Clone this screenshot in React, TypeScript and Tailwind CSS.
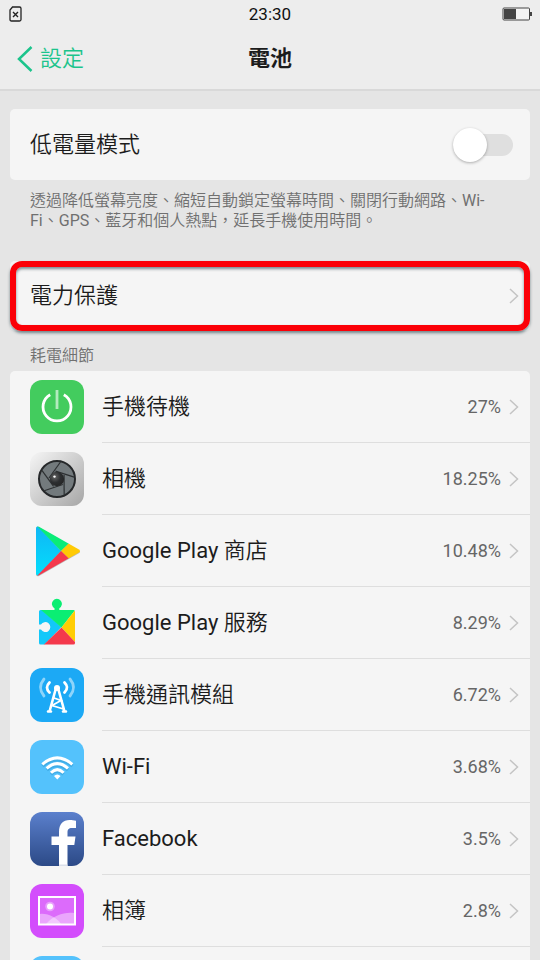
import type { ReactNode } from "react";

function Tile({ className = "", children }: { className?: string; children?: ReactNode }) {
  return (
    <svg viewBox="0 0 54 54" aria-hidden="true" className={`size-[54px] shrink-0 overflow-hidden rounded-xl ${className}`}>
      {children}
    </svg>
  );
}

function PowerIcon() {
  return (
    <Tile className="bg-[#43cc5e]">
      <path d="M20.2 14.7a14 14 0 1 0 13.6 0" fill="none" stroke="#fff" strokeWidth="2.8" />
      <path d="M27 10v19" stroke="#fff" strokeOpacity=".6" strokeWidth="2.8" />
    </Tile>
  );
}

function CameraIcon() {
  return (
    <Tile>
      <defs>
        <linearGradient id="camera-body" x1="0" y1="0" x2="1" y2="1">
          <stop offset="0" stopColor="#f6f6f6" />
          <stop offset="1" stopColor="#a6a6a6" />
        </linearGradient>
        <radialGradient id="camera-lens" cx=".35" cy=".35" r=".8">
          <stop offset="0" stopColor="#666" />
          <stop offset=".5" stopColor="#2c2e30" />
          <stop offset="1" stopColor="#222" />
        </radialGradient>
      </defs>
      <rect width="54" height="54" fill="url(#camera-body)" />
      <circle cx="27" cy="27" r="18" fill="#737a7d" stroke="#26282a" strokeWidth="2" />
      <g stroke="#2d3032" strokeWidth="1.2">
        {[0, 72, 144, 216, 288].map((angle) => (
          <path key={angle} d="M30.5 10L19 26" transform={`rotate(${angle} 27 27)`} />
        ))}
      </g>
      <circle cx="27" cy="27" r="7.2" fill="url(#camera-lens)" />
      <circle cx="24.5" cy="24.6" r="1.2" fill="#fff" />
    </Tile>
  );
}

function PlayStoreIcon() {
  return (
    <Tile>
      <defs>
        <linearGradient id="play-blue" x1="0" y1="0" x2="0" y2="1">
          <stop offset="0" stopColor="#10b4f5" />
          <stop offset="1" stopColor="#04e0fc" />
        </linearGradient>
        <clipPath id="play-shape">
          <path d="M6 4.500Q6 1.500 9 2.800L48.500 25.200Q51.500 27 48.500 28.800L9 51.200Q6 52.500 6 49.500Z" />
        </clipPath>
      </defs>
      <path d="M6 5Q6 2 9 3.300L48.500 26Q51.500 28 48.500 29.600L9 52Q6 53 6 50Z" fill="#bbb" />
      <g clipPath="url(#play-shape)">
        <path d="M6 0L31 27L6 54Z" fill="url(#play-blue)" />
        <path d="M5 0L50 0L39 19.200L31 27Z" fill="#0aec78" />
        <path d="M39 19.200L31 27L39 34.800L56 27Z" fill="#ffca05" />
        <path d="M5 54L31 27L39 34.800L50 54Z" fill="#f4394c" />
      </g>
    </Tile>
  );
}

function PlayServicesIcon() {
  return (
    <Tile>
      <defs>
        <clipPath id="puzzle-shape">
          <path d="M10.500 14H24.500V12.200A5 5 0 1 1 29.300 12.200V14H43.500Q45 14 45 15.500V47Q45 48.500 43.500 48.500H10.500Q9 48.500 9 47V33.600H11A5 5 0 1 0 11 28.600H9V15.500Q9 14 10.500 14Z" />
        </clipPath>
      </defs>
      <g clipPath="url(#puzzle-shape)">
        <path d="M9 11.500L31.500 31L14 49H9Z" fill="#13c8f9" />
        <path d="M9 12L20 0H34L46 13L31.500 31.500L11 14Z" fill="#0aee73" />
        <path d="M46 13L31.500 31.500L46 47Z" fill="#ffcd04" />
        <path d="M13.500 49L31.500 31.500L46 47V49Z" fill="#f4394c" />
      </g>
    </Tile>
  );
}

function CellularIcon() {
  return (
    <Tile className="bg-[#1ca9f5]">
      <g fill="none" stroke="#fff" strokeLinecap="round">
        <path d="M26 20L19.500 43.500M28 20L34.500 43.500M18 43.500H21M33 43.500H36" strokeWidth="2.600" />
        <path d="M24 30L31 32.500L22 37.500L33.500 41" strokeWidth="1.800" />
        <path d="M19.500 14.500Q14.500 19.500 19.500 24.500M34.500 14.500Q39.500 19.500 34.500 24.500" strokeWidth="2.800" />
        <path d="M14 11Q7 19.500 14 28M40 11Q47 19.500 40 28" strokeWidth="2.800" strokeOpacity=".5" />
      </g>
      <circle cx="27" cy="20" r="3" fill="#fff" />
    </Tile>
  );
}

function WifiIcon() {
  return (
    <Tile className="bg-[#54c2fc]">
      <g transform="translate(0 1.500)" fill="none" stroke="#1c86c0" strokeOpacity=".35" strokeWidth="3.200">
        <path d="M12.500 24.500Q27 12 42.500 24.500M16.800 28.500Q27 19.500 38 28.500M21 32.800Q27 26.800 33.500 32.800" />
      </g>
      <g fill="none" stroke="#fff" strokeWidth="3">
        <path d="M12.300 24.300Q27.300 11.500 42.300 24.300M16.600 28.400Q27.300 18.800 38 28.400M21 32.700Q27.300 26.500 33.600 32.700" />
      </g>
      <path d="M24 36Q27.300 33 30.600 36L27.300 39.500Z" fill="#fff" />
    </Tile>
  );
}

function FacebookIcon() {
  return (
    <Tile className="bg-linear-to-b from-[#5b80cd] to-[#2c4a87]">
      <path d="M29 54V33H21.500V24.500H29V20C29 12 33 8 39.500 8C42 8 44 8.200 46 8.700V16H42C38.500 16 37.500 17.500 37.500 20.500V24.500H45.500L44.300 33H37.500V54Z" fill="#fff" />
      <path d="M29 52.500H37.500V54H29Z" fill="#dbe0ea" />
    </Tile>
  );
}

function GalleryIcon() {
  return (
    <Tile className="bg-[#d34dfc]">
      <rect x="9" y="13" width="36" height="27.500" fill="#dc6bfb" />
      <path d="M10 30C18 29 27 34 31 40H10Z" fill="#fff" fillOpacity=".4" />
      <path d="M16 40C24 31 34 28 44 29V40Z" fill="#fff" fillOpacity=".4" />
      <circle cx="20" cy="22.500" r="4.800" fill="#fff" fillOpacity=".35" />
      <circle cx="20" cy="22.500" r="3" fill="#fff" />
      <rect x="9" y="13" width="36" height="27.500" fill="none" stroke="#fff" strokeWidth="2" />
    </Tile>
  );
}

function Chevron() {
  return (
    <svg viewBox="0 0 10 16" aria-hidden="true" className="h-4 w-2.5 shrink-0 fill-none stroke-[#c4c4c4] stroke-[1.5]">
      <path d="M1 1L8.500 8L1 15" />
    </svg>
  );
}

const usage: { name: string; percent: string; icon: ReactNode }[] = [
  { name: "手機待機", percent: "27%", icon: <PowerIcon /> },
  { name: "相機", percent: "18.25%", icon: <CameraIcon /> },
  { name: "Google Play 商店", percent: "10.48%", icon: <PlayStoreIcon /> },
  { name: "Google Play 服務", percent: "8.29%", icon: <PlayServicesIcon /> },
  { name: "手機通訊模組", percent: "6.72%", icon: <CellularIcon /> },
  { name: "Wi-Fi", percent: "3.68%", icon: <WifiIcon /> },
  { name: "Facebook", percent: "3.5%", icon: <FacebookIcon /> },
  { name: "相簿", percent: "2.8%", icon: <GalleryIcon /> },
];

function StatusBar() {
  return (
    <div className="grid h-7 grid-cols-3 items-center px-2">
      <svg viewBox="0 0 14 16" aria-hidden="true" className="h-4 w-3.5 fill-none stroke-[#222]">
        <path d="M4.500 1H11.500Q13 1 13 2.500V13.500Q13 15 11.500 15H3.500Q2 15 2 13.500V4Z" strokeWidth="1.300" />
        <path d="M5 6L10 11M10 6L5 11" strokeWidth="1.400" />
      </svg>
      <time className="text-center text-[17px] leading-7 text-[#111]">23:30</time>
      <svg viewBox="0 0 30 14" aria-hidden="true" className="h-3.5 w-[30px] justify-self-end">
        <rect x="1" y="1" width="26.500" height="12" rx="1" fill="#f4f4f4" stroke="#444" />
        <path d="M2 2H14V12H2Z" fill="#444" />
        <path d="M28 5H30V9H28Z" fill="#444" />
      </svg>
    </div>
  );
}

export default function App() {
  return (
    <div
      lang="zh-Hant"
      className="flex h-screen flex-col overflow-hidden bg-[#e5e5e5] font-['Roboto','Noto_Sans_CJK_TC_DemiLight','Noto_Sans_CJK_TC',sans-serif] text-[#1c1c1c]"
    >
      <header className="shrink-0 border-b-2 border-[#d9d9d9] bg-[#ededed]">
        <StatusBar />
        <div className="grid h-[61px] grid-cols-3 items-center px-[17px]">
          <button type="button" className="flex items-center gap-[7px] text-[22px] leading-8 text-[#1cc48c]">
            <svg viewBox="0 0 16 26" aria-hidden="true" className="h-[26px] w-4 fill-none stroke-current stroke-[2.5]">
              <path d="M14.500 1L2 13L14.500 25" />
            </svg>
            設定
          </button>
          <h1 className="text-center font-['Roboto','Noto_Sans_CJK_TC',sans-serif] text-[22px] leading-8 font-bold">電池</h1>
        </div>
      </header>

      <main className="min-h-0 flex-1 overflow-hidden px-2.5 pt-[18px]">
        <label className="flex h-[71px] items-center justify-between rounded-[5px] bg-[#f5f5f5] pr-[17px] pl-5 text-[22px] leading-8">
          低電量模式
          <input
            type="checkbox"
            role="switch"
            className="h-[22px] w-[60px] appearance-none rounded-full bg-[#dfdfdf] before:-mt-1.5 before:block before:size-[34px] before:rounded-full before:bg-white before:shadow-[0_1px_3px_rgba(0,0,0,0.3)] checked:bg-[#1cc48c] checked:before:ml-[26px]"
          />
        </label>
        <p className="px-5 pt-[11px] text-[16px] leading-5 text-[#707070]">
          透過降低螢幕亮度、縮短自動鎖定螢幕時間、關閉行動網路、Wi-Fi、GPS、藍牙和個人熱點，延長手機使用時間。
        </p>

        <button
          type="button"
          className="relative mt-[30px] flex h-[70px] w-full items-center justify-between rounded-[5px] bg-[#f5f5f5] pr-[11px] pl-5 text-[22px] leading-8"
        >
          電力保護
          <Chevron />
          <span className="absolute inset-0 rounded-xl border-6 border-[#fb0007] shadow-[0_2px_3px_rgba(0,40,50,0.5),inset_0_2px_3px_rgba(0,40,50,0.5)]" />
        </button>

        <h2 className="px-5 pt-[15px] pb-[5px] text-[16px] leading-5 text-[#707070]">耗電細節</h2>
        <ul className="rounded-t-[5px] bg-[#f5f5f5]">
          {usage.map((app) => (
            <li key={app.name}>
              <button type="button" className="flex h-[72px] w-full items-center gap-[18px] pl-5 text-left">
                {app.icon}
                <span className="flex h-full flex-1 items-center gap-2 border-b border-[#dedede] pr-[11px]">
                  <span className="flex-1 text-[22px] leading-8">{app.name}</span>
                  <span className="text-[18px] leading-8 text-[#666]">{app.percent}</span>
                  <Chevron />
                </span>
              </button>
            </li>
          ))}
          <li className="flex h-[72px] items-center pl-5">
            <Tile className="bg-[#54c2fc]" />
          </li>
        </ul>
      </main>
    </div>
  );
}
